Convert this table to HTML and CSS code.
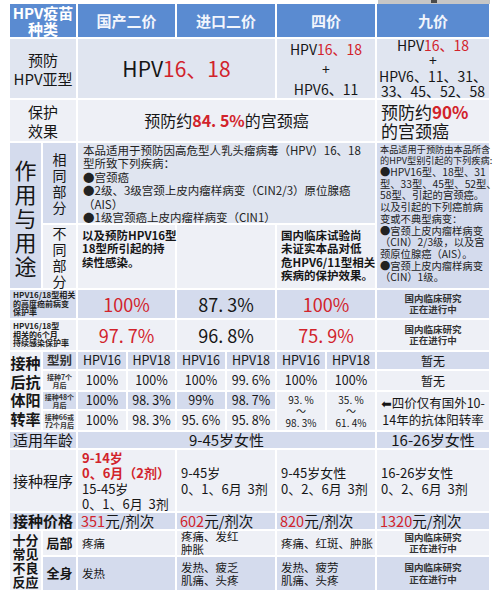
FILE: index.html
```html
<!DOCTYPE html>
<html lang="zh-CN">
<head>
<meta charset="utf-8">
<title>HPV疫苗对比</title>
<link rel="stylesheet" href="styles.css">
</head>
<body>
<div class="tab"><span class="tab-knob"></span></div>
<div class="sheet">
  <div class="cell hd a r1 hd1"><div>HPV疫苗<br>种类</div></div>
  <div class="cell hd g r1 hd2"><div>国产二价</div></div>
  <div class="cell hd j r1 hd2"><div>进口二价</div></div>
  <div class="cell hd s r1 hd2"><div>四价</div></div>
  <div class="cell hd n r1 hd2"><div>九价</div></div>

  <div class="cell md a r2 lab"><div>预防<br>HPV亚型</div></div>
  <div class="cell md gj r2 big"><div>HPV<span class="red">16、18</span></div></div>
  <div class="cell md s r2 typ4"><div>HPV<span class="red">16、18</span><br>+<br>HPV6、11</div></div>
  <div class="cell md n r2 typ9"><div>HPV<span class="red">16、18</span><br>+<br>HPV6、11、31、<br>33、45、52、58</div></div>

  <div class="cell lt a r3 lab"><div>保护<br>效果</div></div>
  <div class="cell lt gs r3 eff"><div>预防约<b class="red">84. 5%</b>的宫颈癌</div></div>
  <div class="cell lt n r3 eff9 left"><div>预防约<b class="red">90%</b><br>的宫颈癌</div></div>

  <div class="cell dk a1 r45 vert"><div>作<br>用<br>与<br>用<br>途</div></div>
  <div class="cell dk a2 r4 vsm"><div>相<br>同<br>部<br>分</div></div>
  <div class="cell md gs r4 left top desc"><div>本品适用于预防因高危型人乳头瘤病毒（HPV）16、18<br>型所致下列疾病：<br>●宫颈癌<br>●2级、3级宫颈上皮内瘤样病变（CIN2/3）原位腺癌<br>（AIS）<br>●1级宫颈癌上皮内瘤样病变（CIN1）</div></div>
  <div class="cell dk n r45 left top nine">
    <div class="nine-intro">本品适用于预防由本品所含<br>的HPV型别引起的下列疾病:</div>
    <div>●HPV16型、18型、31<br>型、33型、45型、52型、<br>58型、引起的宫颈癌。<br>以及引起的下列癌前病<br>变或不典型病变：<br>●宫颈上皮内瘤样病变<br>（CIN）2/3级，以及宫<br>颈原位腺癌（AIS）。<br>●宫颈上皮内瘤样病变<br>（CIN）1级。</div>
  </div>

  <div class="cell lt a2 r5 vsm"><div>不<br>同<br>部<br>分</div></div>
  <div class="cell lt g r5 left top diff"><div>以及预防HPV16型、<br>18型所引起的持<br>续性感染。</div></div>
  <div class="cell lt j r5"></div>
  <div class="cell lt s r5 left top diff"><div>国内临床试验尚<br>未证实本品对低<br>危HPV6/11型相关<br>疾病的保护效果。</div></div>

  <div class="cell dk a r6 left tinyl"><div>HPV16/18型相关<br>的高度癌前病变<br>保护率</div></div>
  <div class="cell dk g r6 pct red"><div>100%</div></div>
  <div class="cell dk j r6 pct"><div>87. 3%</div></div>
  <div class="cell dk s r6 pct red"><div>100%</div></div>
  <div class="cell dk n r6 note"><div>国内临床研究<br>正在进行中</div></div>

  <div class="cell lt a r7 left tinyl"><div>HPV16/18型<br>相关的6个月<br>持续感染保护率</div></div>
  <div class="cell lt g r7 pct red"><div>97. 7%</div></div>
  <div class="cell lt j r7 pct"><div>96. 8%</div></div>
  <div class="cell lt s r7 pct red"><div>75. 9%</div></div>
  <div class="cell lt n r7 note"><div>国内临床研究<br>正在进行中</div></div>

  <div class="cell lt a1 r811 anti"><div>接种<br>后抗<br>体阳<br>转率</div></div>
  <div class="cell dk a2 r8 kind"><div>型别</div></div>
  <div class="cell dk k3 r8 val"><div>HPV16</div></div>
  <div class="cell dk k4 r8 val"><div>HPV18</div></div>
  <div class="cell dk k5 r8 val"><div>HPV16</div></div>
  <div class="cell dk k6 r8 val"><div>HPV18</div></div>
  <div class="cell dk k7 r8 val"><div>HPV16</div></div>
  <div class="cell dk k8 r8 val"><div>HPV18</div></div>
  <div class="cell dk n r8 none"><div>暂无</div></div>

  <div class="cell lt a2 r9 mo"><div>接种7个<br>月后</div></div>
  <div class="cell lt k3 r9 val"><div>100%</div></div>
  <div class="cell lt k4 r9 val"><div>100%</div></div>
  <div class="cell lt k5 r9 val"><div>100%</div></div>
  <div class="cell lt k6 r9 val"><div>99. 6%</div></div>
  <div class="cell lt k7 r9 val"><div>100%</div></div>
  <div class="cell lt k8 r9 val"><div>100%</div></div>
  <div class="cell lt n r9 none"><div>暂无</div></div>

  <div class="cell dk a2 r10 mo"><div>接种48个<br>月后</div></div>
  <div class="cell dk k3 r10 val"><div>100%</div></div>
  <div class="cell dk k4 r10 val"><div>98. 3%</div></div>
  <div class="cell dk k5 r10 val"><div>99%</div></div>
  <div class="cell dk k6 r10 val"><div>98. 7%</div></div>
  <div class="cell lt k7 r1011 rng"><div>93. %<br>～<br>98. 3%</div></div>
  <div class="cell lt k8 r1011 rng"><div>35. %<br>～<br>61. 4%</div></div>
  <div class="cell lt n r1011 four"><div><span class="arrow">⬅</span>四价仅有国外10-<br>14年的抗体阳转率</div></div>

  <div class="cell lt a2 r11 mo"><div>接种66或<br>72个月后</div></div>
  <div class="cell lt k3 r11 val"><div>100%</div></div>
  <div class="cell lt k4 r11 val"><div>98. 3%</div></div>
  <div class="cell lt k5 r11 val"><div>95. 6%</div></div>
  <div class="cell lt k6 r11 val"><div>95. 8%</div></div>

  <div class="cell dk a r12 lab2"><div>适用年龄</div></div>
  <div class="cell dk gs r12 age"><div>9-45岁女性</div></div>
  <div class="cell dk n r12 age"><div>16-26岁女性</div></div>

  <div class="cell lt a r13 lab2"><div>接种程序</div></div>
  <div class="cell lt g r13 left sched"><div><b class="red">9-14岁</b><br><b class="red">0、6月（2剂）</b><br>15-45岁<br>0、1、6月&nbsp;&nbsp;3剂</div></div>
  <div class="cell lt j r13 left sched"><div>9-45岁<br>0、1、6月&nbsp;&nbsp;3剂</div></div>
  <div class="cell lt s r13 left sched"><div>9-45岁女性<br>0、2、6月&nbsp;&nbsp;3剂</div></div>
  <div class="cell lt n r13 left sched"><div>16-26岁女性<br>0、2、6月&nbsp;&nbsp;3剂</div></div>

  <div class="cell dk a r14 lab2 price-lab"><div>接种价格</div></div>
  <div class="cell dk g r14 left price"><div><span class="red">351</span>元/剂次</div></div>
  <div class="cell dk j r14 left price"><div><span class="red">602</span>元/剂次</div></div>
  <div class="cell dk s r14 left price"><div><span class="red">820</span>元/剂次</div></div>
  <div class="cell dk n r14 left price"><div><span class="red">1320</span>元/剂次</div></div>

  <div class="cell lt a1 r1516 adv"><div>十分<br>常见<br>不良<br>反应</div></div>
  <div class="cell lt a2 r15 part"><div>局部</div></div>
  <div class="cell lt g r15 left eff2"><div>疼痛</div></div>
  <div class="cell lt j r15 left eff2"><div>疼痛、发红<br>肿胀</div></div>
  <div class="cell lt s r15 left eff2"><div>疼痛、红斑、肿胀</div></div>
  <div class="cell lt n r15 note"><div>国内临床研究<br>正在进行中</div></div>

  <div class="cell dk a2 r16 part"><div>全身</div></div>
  <div class="cell dk g r16 left eff2"><div>发热</div></div>
  <div class="cell dk j r16 left eff2"><div>发热、疲乏<br>肌痛、头疼</div></div>
  <div class="cell dk s r16 left eff2"><div>发热、疲劳<br>肌痛、头疼</div></div>
  <div class="cell dk n r16 note"><div>国内临床研究<br>正在进行中</div></div>
</div>
</body>
</html>
```

FILE: styles.css
```css
* { box-sizing: border-box; }
body {
  margin: 0;
  background: #fff;
  font-family: "Noto Sans CJK SC", "Noto Sans", "DejaVu Sans", sans-serif;
  color: #161616;
}
.tab {
  margin-left: 378px;
  width: 112px;
  height: 4px;
  background: #c6c6c6;
  display: flex;
  justify-content: center;
}
.tab-knob { width: 6px; height: 3px; background: #4a4a4a; }

.sheet {
  margin-left: 10px;
  width: 479px;
  display: grid;
  grid-template-columns: 31px 33px 48px 47px 48px 48px 48px 48px 112px;
  grid-template-rows: 33px 59px 41px 80px 63px 28px 30px 17px 19px 17px 19px 16px 61px 16px 24px 33px;
  gap: 2px;
  background: #fff;
}
.cell {
  display: flex;
  flex-direction: column;
  align-items: center;
  justify-content: center;
  text-align: center;
  white-space: nowrap;
  line-height: 1.15;
  min-width: 0;
}
.left { align-items: flex-start; text-align: left; padding-left: 4px; }
.top { justify-content: flex-start; }

/* column placement */
.a { grid-column: 1 / 3; }
.a1 { grid-column: 1 / 2; }
.a2 { grid-column: 2 / 3; }
.g { grid-column: 3 / 5; }
.j { grid-column: 5 / 7; }
.s { grid-column: 7 / 9; }
.n { grid-column: 9 / 10; }
.gj { grid-column: 3 / 7; }
.gs { grid-column: 3 / 9; }
.k3 { grid-column: 3 / 4; }
.k4 { grid-column: 4 / 5; }
.k5 { grid-column: 5 / 6; }
.k6 { grid-column: 6 / 7; }
.k7 { grid-column: 7 / 8; }
.k8 { grid-column: 8 / 9; }

/* row placement */
.r1 { grid-row: 1; } .r2 { grid-row: 2; } .r3 { grid-row: 3; } .r4 { grid-row: 4; }
.r5 { grid-row: 5; } .r6 { grid-row: 6; } .r7 { grid-row: 7; } .r8 { grid-row: 8; }
.r9 { grid-row: 9; } .r10 { grid-row: 10; } .r11 { grid-row: 11; } .r12 { grid-row: 12; }
.r13 { grid-row: 13; } .r14 { grid-row: 14; } .r15 { grid-row: 15; } .r16 { grid-row: 16; }
.r45 { grid-row: 4 / 6; }
.r811 { grid-row: 8 / 12; }
.r1011 { grid-row: 10 / 12; }
.r1516 { grid-row: 15 / 17; }

/* backgrounds */
.hd { background: #5a8bd1; color: #f2f5fc; font-weight: 700; }
.md { background: #e0e5f0; }
.lt { background: #eef0f6; }
.dk { background: #d4dbed; }

.red { color: #d2232b; }

.hd1 { font-size: 15px; line-height: 16px; color: #fff; }
.hd2 { font-size: 15px; }

.lab { font-size: 15px; line-height: 19px; }
.big { font-size: 21px; }
.typ4 { font-size: 14px; line-height: 20px; }
.typ9 { font-size: 14px; line-height: 15.5px; }
.eff { font-size: 16px; line-height: 19px; }
.eff9 { font-size: 17px; line-height: 19px; }
.eff b, .eff9 b { font-weight: 700; }

.vert { font-size: 22px; line-height: 24px; padding-top: 2px; }
.vsm { font-size: 14px; line-height: 16px; }
.desc { font-size: 11.5px; line-height: 13.4px; padding-top: 1px; padding-left: 5px; color: #222; }
.nine { font-size: 10.3px; line-height: 11.7px; padding-top: 1px; padding-left: 3px; color: #222; }
.nine-intro { font-size: 9.2px; line-height: 11px; }
.diff { font-size: 11.5px; line-height: 13.3px; font-weight: 700; padding-top: 4px; padding-left: 4px; }

.tinyl { font-size: 8px; line-height: 8.6px; font-weight: 700; padding-left: 3px; color: #222; }
.pct { font-size: 18px; }
.note { font-size: 9.5px; line-height: 11.5px; font-weight: 700; color: #333; }

.anti { font-size: 15px; line-height: 18.5px; font-weight: 700; }
.kind { font-size: 12.5px; font-weight: 700; color: #333; }
.mo { font-size: 7px; line-height: 8px; font-weight: 700; color: #333; }
.val { font-size: 12.5px; }
.none { font-size: 12px; }
.rng { font-size: 10px; line-height: 11.5px; }
.four { font-size: 12.5px; line-height: 16px; }
.arrow { font-family: "DejaVu Sans", sans-serif; }

.lab2 { font-size: 15px; }
.age { font-size: 15px; }
.sched { font-size: 13px; line-height: 15.5px; }
.price-lab { font-weight: 700; }
.price { font-size: 14.5px; padding-left: 3px; }
.adv { font-size: 13px; line-height: 14px; font-weight: 700; }
.part { font-size: 13px; font-weight: 700; }
.eff2 { font-size: 11.5px; line-height: 13px; }
```
